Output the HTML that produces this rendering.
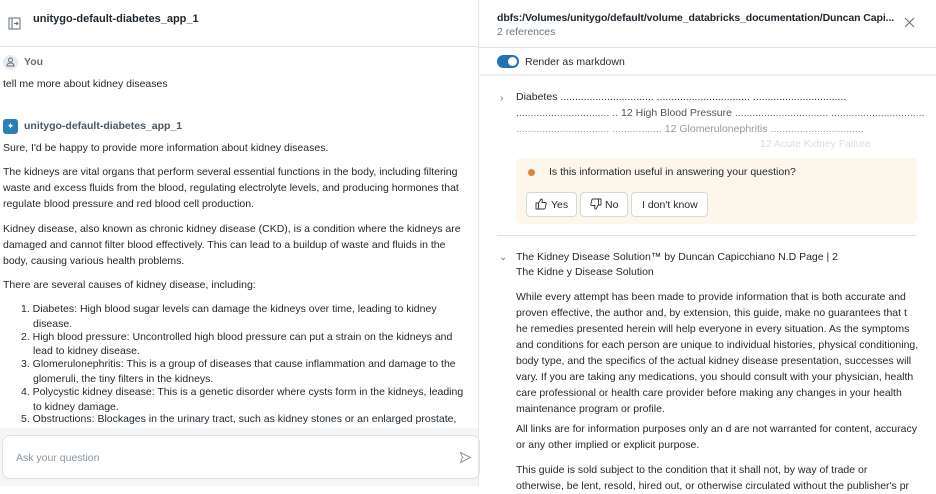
<!DOCTYPE html>
<html><head><style>
*{box-sizing:border-box;margin:0;padding:0}
body{width:936px;height:486px;overflow:hidden;font-family:"Liberation Sans",sans-serif;font-size:10.5px;color:#1f272d;background:#fff;position:relative}
.abs{position:absolute;white-space:nowrap}
.l p{position:absolute;left:3px;white-space:nowrap;line-height:16px}
.r p{position:absolute;left:516px;white-space:nowrap;line-height:16px}
</style></head><body>
<!-- left -->
<div class="abs" style="left:0;top:0;width:478px;height:47px;border-bottom:1px solid #e3e6e9"></div>
<svg class="abs" style="left:8px;top:17px" width="13" height="13" viewBox="0 0 13 13" fill="none" stroke="#5f6b75" stroke-width="1"><rect x="1" y="1" width="11" height="11"/><path d="M4 1v11M6 6.5h4M8.5 5l1.5 1.5-1.5 1.5"/></svg>
<div class="abs" style="left:33px;top:13px;font-weight:bold;font-size:11px">unitygo-default-diabetes_app_1</div>
<div class="abs" style="left:3px;top:55px;width:15px;height:15px;border-radius:50%;background:#e8ebee"></div>
<svg class="abs" style="left:6px;top:57px" width="9" height="10" viewBox="0 0 9 10" fill="none" stroke="#5f6b75" stroke-width="0.9"><circle cx="4.5" cy="3" r="2"/><path d="M1 9c0-2 1.5-3 3.5-3s3.5 1 3.5 3z"/></svg>
<div class="abs" style="left:24px;top:56px;color:#5f6b75;font-weight:bold">You</div>
<div class="l"><p style="top:76px">tell me more about kidney diseases</p></div>
<div class="abs" style="left:3px;top:119px;width:15px;height:15px;border-radius:3px;background:#2a7fb8;color:#fff;font-size:9px;text-align:center;line-height:15px">✦</div>
<div class="abs" style="left:24px;top:120px;color:#4a5862;font-weight:bold">unitygo-default-diabetes_app_1</div>
<div class="l">
<p style="top:140px">Sure, I'd be happy to provide more information about kidney diseases.</p>
<p style="top:164px">The kidneys are vital organs that perform several essential functions in the body, including filtering</p>
<p style="top:180px">waste and excess fluids from the blood, regulating electrolyte levels, and producing hormones that</p>
<p style="top:196px">regulate blood pressure and red blood cell production.</p>
<p style="top:221px">Kidney disease, also known as chronic kidney disease (CKD), is a condition where the kidneys are</p>
<p style="top:237px">damaged and cannot filter blood effectively. This can lead to a buildup of waste and fluids in the</p>
<p style="top:253px">body, causing various health problems.</p>
<p style="top:277px">There are several causes of kidney disease, including:</p>
<p style="top:301px;left:21px">1. Diabetes: High blood sugar levels can damage the kidneys over time, leading to kidney</p>
<p style="top:316px;left:33px">disease.</p>
<p style="top:329px;left:21px">2. High blood pressure: Uncontrolled high blood pressure can put a strain on the kidneys and</p>
<p style="top:343px;left:33px">lead to kidney disease.</p>
<p style="top:356px;left:21px">3. Glomerulonephritis: This is a group of diseases that cause inflammation and damage to the</p>
<p style="top:371px;left:33px">glomeruli, the tiny filters in the kidneys.</p>
<p style="top:384px;left:21px">4. Polycystic kidney disease: This is a genetic disorder where cysts form in the kidneys, leading</p>
<p style="top:399px;left:33px">to kidney damage.</p>
<p style="top:411px;left:21px">5. Obstructions: Blockages in the urinary tract, such as kidney stones or an enlarged prostate,</p>
</div>
<div class="abs" style="left:0;top:428px;width:478px;height:58px;background:#f4f5f6"></div>
<div class="abs" style="left:2px;top:435px;width:478px;height:44px;background:#fff;border:1px solid #dfe3e6;border-radius:8px"></div>
<div class="abs" style="left:16px;top:452px;color:#8a96a0">Ask your question</div>
<svg class="abs" style="left:459px;top:451px" width="13" height="13" viewBox="0 0 13 13" fill="none" stroke="#8a96a0" stroke-width="1"><path d="M1.5 1.5l10 5-10 5 2-5z"/></svg>
<div class="abs" style="left:478px;top:0;width:1px;height:486px;background:#e3e6e9"></div>
<!-- right -->
<div class="abs" style="left:497px;top:12px;font-weight:bold;font-size:10.5px;letter-spacing:-0.1px">dbfs:/Volumes/unitygo/default/volume_databricks_documentation/Duncan Capi...</div>
<div class="abs" style="left:497px;top:26px;color:#6b7780">2 references</div>
<svg class="abs" style="left:904px;top:17px" width="11" height="11" viewBox="0 0 11 11" stroke="#6b7780" stroke-width="1.2"><path d="M1 1l9 9M10 1l-9 9"/></svg>
<div class="abs" style="left:479px;top:47px;width:457px;height:1px;background:#e3e6e9"></div>
<div class="abs" style="left:497px;top:55px;width:22px;height:13px;border-radius:7px;background:#2272b4"></div>
<div class="abs" style="left:508px;top:57px;width:9px;height:9px;border-radius:50%;background:#fff"></div>
<div class="abs" style="left:525px;top:56px">Render as markdown</div>
<div class="abs" style="left:479px;top:74px;width:457px;height:2px;background:#eef0f2"></div>
<div class="abs" style="left:500px;top:92px;color:#6b7780">›</div>
<div class="r">
<p style="top:89px">Diabetes ................................ ................................ ................................</p>
<p style="top:105px;color:#555">................................ .. 12 High Blood Pressure ................................ ................................</p>
<p style="top:121px;color:#999">................................ ................. 12 Glomerulonephritis ................................</p>
<p style="top:136px;color:#ddd;left:760px">12 Acute Kidney Failure</p>
</div>
<div class="abs" style="left:516px;top:158px;width:401px;height:66px;background:#fdf6ea;border-radius:5px"></div>
<div class="abs" style="left:528px;top:169px;width:7px;height:7px;border-radius:50%;background:#e0852f"></div>
<div class="abs" style="left:549px;top:166px">Is this information useful in answering your question?</div>
<div class="abs" style="left:526px;top:192px;width:51px;height:25px;border:1px solid #d5d9dc;border-radius:4px;background:#fff;padding:6px 0 0 24px">Yes</div>
<svg class="abs" style="left:535px;top:198px" width="12" height="12" viewBox="0 0 12 12" fill="none" stroke="#333" stroke-width="0.9"><path d="M1 5h2.5v6H1zM3.5 5.5L6 1c1 0 1.5.6 1.3 1.6L7 4.5h3.2c.8 0 1.2.6 1 1.3l-1 4.3c-.2.6-.6.9-1.2.9H3.5"/></svg>
<div class="abs" style="left:580px;top:192px;width:48px;height:25px;border:1px solid #d5d9dc;border-radius:4px;background:#fff;padding:6px 0 0 24px">No</div>
<svg class="abs" style="left:590px;top:198px" width="12" height="12" viewBox="0 0 12 12" fill="none" stroke="#333" stroke-width="0.9"><g transform="rotate(180 6 6)"><path d="M1 5h2.5v6H1zM3.5 5.5L6 1c1 0 1.5.6 1.3 1.6L7 4.5h3.2c.8 0 1.2.6 1 1.3l-1 4.3c-.2.6-.6.9-1.2.9H3.5"/></g></svg>
<div class="abs" style="left:631px;top:192px;width:77px;height:25px;border:1px solid #d5d9dc;border-radius:4px;background:#fff;padding:6px 0 0 10px">I don't know</div>
<div class="abs" style="left:497px;top:235px;width:420px;height:1px;background:#dfe3e6"></div>
<div class="abs" style="left:499px;top:252px;color:#6b7780;font-size:10px">⌄</div>
<div class="r">
<p style="top:249px">The Kidney Disease Solution™ by Duncan Capicchiano N.D Page | 2</p>
<p style="top:264px">The Kidne y Disease Solution</p>
<p style="top:289px">While every attempt has been made to provide information that is both accurate and</p>
<p style="top:305px">proven effective, the author and, by extension, this guide, make no guarantees that t</p>
<p style="top:321px">he remedies presented herein will help everyone in every situation. As the symptoms</p>
<p style="top:337px">and conditions for each person are unique to individual histories, physical conditioning,</p>
<p style="top:353px">body type, and the specifics of the actual kidney disease presentation, successes will</p>
<p style="top:369px">vary. If you are taking any medications, you should consult with your physician, health</p>
<p style="top:385px">care professional or health care provider before making any changes in your health</p>
<p style="top:401px">maintenance program or profile.</p>
<p style="top:421px">All links are for information purposes only an d are not warranted for content, accuracy</p>
<p style="top:437px">or any other implied or explicit purpose.</p>
<p style="top:462px">This guide is sold subject to the condition that it shall not, by way of trade or</p>
<p style="top:478px">otherwise, be lent, resold, hired out, or otherwise circulated without the publisher's pr</p>
</div>
</body></html>
